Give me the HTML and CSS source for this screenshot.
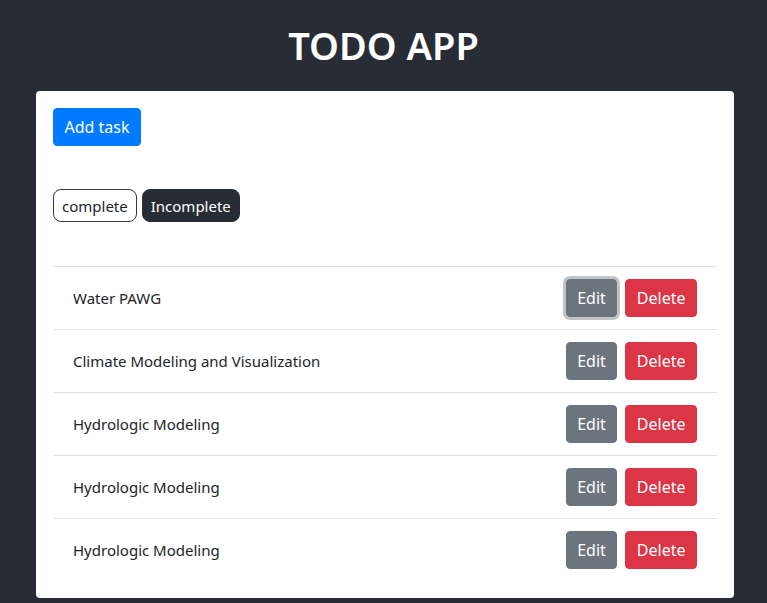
FILE: index.html
```html
<!DOCTYPE html>
<html>
<head>
<meta charset="utf-8">
<link rel="stylesheet" href="styles.css">
</head>
<body>
<h1 class="title">TODO APP</h1>
<div class="card">
  <div class="toolbar">
    <button class="btn btn-primary">Add task</button>
  </div>
  <div class="filters">
    <button class="pill pill-outline">complete</button>
    <button class="pill pill-dark">Incomplete</button>
  </div>
  <ul class="list">
    <li class="item"><span class="item-text">Water PAWG</span><div class="actions"><button class="btn btn-secondary focus">Edit</button><button class="btn btn-danger">Delete</button></div></li>
    <li class="item"><span class="item-text">Climate Modeling and Visualization</span><div class="actions"><button class="btn btn-secondary">Edit</button><button class="btn btn-danger">Delete</button></div></li>
    <li class="item"><span class="item-text">Hydrologic Modeling</span><div class="actions"><button class="btn btn-secondary">Edit</button><button class="btn btn-danger">Delete</button></div></li>
    <li class="item"><span class="item-text">Hydrologic Modeling</span><div class="actions"><button class="btn btn-secondary">Edit</button><button class="btn btn-danger">Delete</button></div></li>
    <li class="item"><span class="item-text">Hydrologic Modeling</span><div class="actions"><button class="btn btn-secondary">Edit</button><button class="btn btn-danger">Delete</button></div></li>
  </ul>
</div>
</body>
</html>
```
FILE: styles.css
```css
* { box-sizing: border-box; }
html, body { margin: 0; padding: 0; }
body {
  background: #282c34;
  font-family: "Noto Sans", "Open Sans", sans-serif;
  color: #212529;
  height: 603px;
  overflow: hidden;
}
.title {
  margin: 0;
  padding-top: 21px;
  height: 91px;
  text-align: center;
  color: #fff;
  font-size: 38px;
  font-weight: 600;
  line-height: 48px;
}
.card {
  width: 698px;
  margin-left: 36px;
  background: #fff;
  border-radius: 4px;
  padding: 17px 17px 17px;
}
.btn {
  font-family: inherit;
  font-size: 16px;
  border: 1px solid transparent;
  border-radius: 4px;
  color: #fff;
  height: 38px;
  padding: 0 10.5px;
  cursor: pointer;
}
.btn-primary { background: #007bff; border-color: #007bff; }
.btn-secondary { background: #6c757d; border-color: #6c757d; }
.btn-danger { background: #dc3545; border-color: #dc3545; }
.focus { box-shadow: 0 0 0 3px rgba(130,138,145,.5); }
.toolbar { display: flex; }
.filters {
  display: flex;
  gap: 5px;
  margin-top: 43px;
  margin-bottom: 44px;
}
.pill {
  font-family: inherit;
  font-size: 15px;
  height: 33px;
  padding: 0 8px;
  border-radius: 8px;
  border: 1px solid #343a40;
}
.pill-outline { background: #fff; color: #212529; }
.pill-dark { background: #282c34; border-color: #282c34; color: #fff; }
.list {
  list-style: none;
  margin: 0;
  padding: 0;
}
.item {
  display: flex;
  align-items: center;
  justify-content: space-between;
  padding: 12px 20px;
  border-top: 1px solid #dee2e6;
}
.item-text { font-size: 15px; }
.actions { display: flex; gap: 8px; }
```
